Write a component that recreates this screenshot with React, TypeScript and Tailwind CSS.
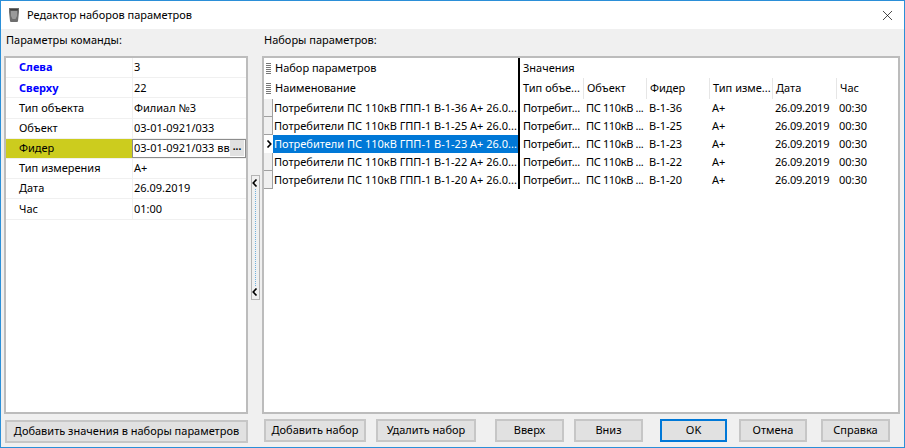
import React from "react";
import { X } from "lucide-react";

const params = [
  { name: "Слева", value: "3", bold: true },
  { name: "Сверху", value: "22", bold: true },
  { name: "Тип объекта", value: "Филиал №3" },
  { name: "Объект", value: "03-01-0921/033" },
  { name: "Фидер", value: "03-01-0921/033 вв", active: true },
  { name: "Тип измерения", value: "А+" },
  { name: "Дата", value: "26.09.2019" },
  { name: "Час", value: "01:00" },
];

const feeders = ["В-1-36", "В-1-25", "В-1-23", "В-1-22", "В-1-20"];
const columns = ["Тип объе...", "Объект", "Фидер", "Тип изме...", "Дата", "Час"];
const colWidth = ["w-[64px]", "w-[63px]", "w-[63px]", "w-[63px]", "w-[64px]", "w-[50px]"];

const Btn = ({ label, width, primary }: { label: string; width: string; primary?: boolean }) => (
  <button
    className={`h-[23px] ${width} bg-[#e1e1e1] text-[11px] text-black ${
      primary ? "border-2 border-[#0078d7]" : "border-2 border-[#c6c6c6]"
    }`}
  >
    {label}
  </button>
);

const Grip = () => (
  <div className="w-[9px] flex justify-center">
    <div className="w-[5px] h-[11px] bg-[repeating-linear-gradient(to_bottom,#777_0,#777_1px,transparent_1px,transparent_2px)]" />
  </div>
);

const Chevron = ({ flip }: { flip?: boolean }) => (
  <svg width="6" height="8" viewBox="0 0 6 8" className={flip ? "rotate-180" : ""}>
    <path d="M4.5 0.5 L1.2 4 L4.5 7.5" fill="none" stroke="#000" strokeWidth="1.6" />
  </svg>
);

export default function App() {
  return (
    <div
      className="w-[905px] h-[448px] flex flex-col bg-[#f0f0f0] border border-[#2b8fd8] overflow-hidden text-[11px] text-black"
      style={{ fontFamily: '"Noto Sans", sans-serif' }}
    >
      {/* title bar */}
      <div className="h-[28px] shrink-0 bg-white flex items-center pl-[7px] pr-[8px]">
        <svg width="12" height="16" viewBox="0 0 12 16" className="mr-[7px]">
          <path d="M1 1 H11 V5 L10 14 Q10 15 9 15 H3 Q2 15 2 14 L1 5 Z" fill="#6e6e6e" />
          <path d="M3 4 H9 V9 L7.5 12 H4.5 L3 9 Z" fill="#9a9a9a" />
          <path d="M2 2 H10 V3.5 H2 Z" fill="#3f3f3f" />
        </svg>
        <span className="flex-1">Редактор наборов параметров</span>
        <X size={17} strokeWidth={1} />
      </div>

      <div className="flex-1 flex flex-col pt-[1px] pl-[3px] pr-[4px] pb-[3px]">
        <div className="flex-1 flex min-h-0">
          {/* left panel */}
          <div className="w-[244px] flex flex-col">
            <div className="h-[26px] pl-[2px] pt-[2px]">Параметры команды:</div>
            <div className="flex-1 bg-white border-2 border-[#bcbcbc]">
              {params.map((p) => (
                <div key={p.name} className="h-[20.2px] flex border-b border-[#f0f0f0]">
                  <div
                    className={`w-[126px] shrink-0 pl-[13px] flex items-center ${p.active ? "bg-[#cccc1e]" : ""} ${
                      p.bold ? "font-bold text-[#0000ff]" : ""
                    }`}
                  >
                    {p.name}
                  </div>
                  {p.active ? (
                    <div className="flex-1 min-w-0 flex items-center border border-[#8c8c8c] bg-white pl-[1px]">
                      <span className="flex-1 min-w-0 overflow-hidden whitespace-nowrap">{p.value}</span>
                      <span className="w-[14px] h-[16px] mr-[1px] bg-[#e1e1e1] flex items-center justify-center text-[10px] font-bold leading-none pb-[4px]">
                        ...
                      </span>
                    </div>
                  ) : (
                    <div className="flex-1 border-l border-[#f0f0f0] pl-[1px] flex items-center">{p.value}</div>
                  )}
                </div>
              ))}
            </div>
          </div>

          {/* splitter */}
          <div className="w-[14px] flex justify-center items-start pt-[145px]">
            <div className="w-[9px] h-[125px] border border-[#b4b4b4] bg-[#f0f0f0] flex flex-col items-center justify-between py-[3px]">
              <Chevron />
              <div className="flex-1 my-[2px] border-l border-dotted border-[#6fb1e0]" />
              <Chevron />
            </div>
          </div>

          {/* right panel */}
          <div className="flex-1 flex flex-col">
            <div className="h-[26px] pl-[2px] pt-[2px]">Наборы параметров:</div>
            <div className="flex-1 bg-white border-2 border-[#bcbcbc] flex items-start">
              <div className="w-[254px] shrink-0">
                <div className="h-[20px] flex items-center">
                  <Grip />
                  <span className="pl-[2px]">Набор параметров</span>
                </div>
                <div className="h-[21px] flex items-center">
                  <Grip />
                  <span className="pl-[2px]">Наименование</span>
                </div>
                {feeders.map((f, i) => (
                  <div key={f} className="h-[18px] flex">
                    <div
                      className={`w-[9px] shrink-0 flex items-center justify-center ${
                        i === 2 ? "" : "bg-[#f0f0f0] border-r border-b border-[#a0a0a0]"
                      }`}
                    >
                      {i === 2 && <Chevron flip />}
                    </div>
                    <div
                      className={`w-[245px] pl-[1px] flex items-center whitespace-nowrap overflow-hidden ${
                        i === 2 ? "bg-[#0078d7] text-white" : ""
                      }`}
                    >
                      Потребители ПС 110кВ ГПП-1 {f} А+ 26.0...
                    </div>
                  </div>
                ))}
              </div>
              <div className="w-[2px] h-[131px] bg-black shrink-0" />
              <div className="flex-1">
                <div className="h-[20px] pl-[3px] flex items-center">Значения</div>
                <div className="h-[21px] flex">
                  {columns.map((c, i) => (
                    <div
                      key={c}
                      className={`${colWidth[i]} shrink-0 pl-[3px] flex items-center whitespace-nowrap overflow-hidden border-r border-[#e6e6e6] last:border-r-0`}
                    >
                      {c}
                    </div>
                  ))}
                </div>
                {feeders.map((f) => (
                  <div key={f} className="h-[18px] flex items-center whitespace-nowrap">
                    <div className={`${colWidth[0]} shrink-0 pl-[3px] tracking-[-0.2px]`}>Потребит...</div>
                    <div className={`${colWidth[1]} shrink-0 pl-[2px] tracking-[-0.35px]`}>ПС 110кВ ...</div>
                    <div className={`${colWidth[2]} shrink-0 pl-[2px]`}>{f}</div>
                    <div className={`${colWidth[3]} shrink-0 pl-[2px]`}>А+</div>
                    <div className={`${colWidth[4]} shrink-0 pl-[2px] tracking-[-0.2px]`}>26.09.2019</div>
                    <div className={`${colWidth[5]} shrink-0 pl-[2px]`}>00:30</div>
                  </div>
                ))}
              </div>
            </div>
          </div>
        </div>

        {/* footer */}
        <div className="h-[30px] shrink-0 flex items-end pb-[1px]">
          <div className="w-[245px] pl-[1px]">
            <Btn label="Добавить значения в наборы параметров" width="w-[243px]" />
          </div>
          <div className="flex pl-[15px] pb-[1px]">
            <Btn label="Добавить набор" width="w-[102px]" />
            <div className="w-[10px]" />
            <Btn label="Удалить набор" width="w-[100px]" />
            <div className="w-[19px]" />
            <Btn label="Вверх" width="w-[69px]" />
            <div className="w-[10px]" />
            <Btn label="Вниз" width="w-[69px]" />
            <div className="w-[17px]" />
            <Btn label="OK" width="w-[67px]" primary />
            <div className="w-[12px]" />
            <Btn label="Отмена" width="w-[68px]" />
            <div className="w-[14px]" />
            <Btn label="Справка" width="w-[69px]" />
          </div>
        </div>
      </div>
    </div>
  );
}
